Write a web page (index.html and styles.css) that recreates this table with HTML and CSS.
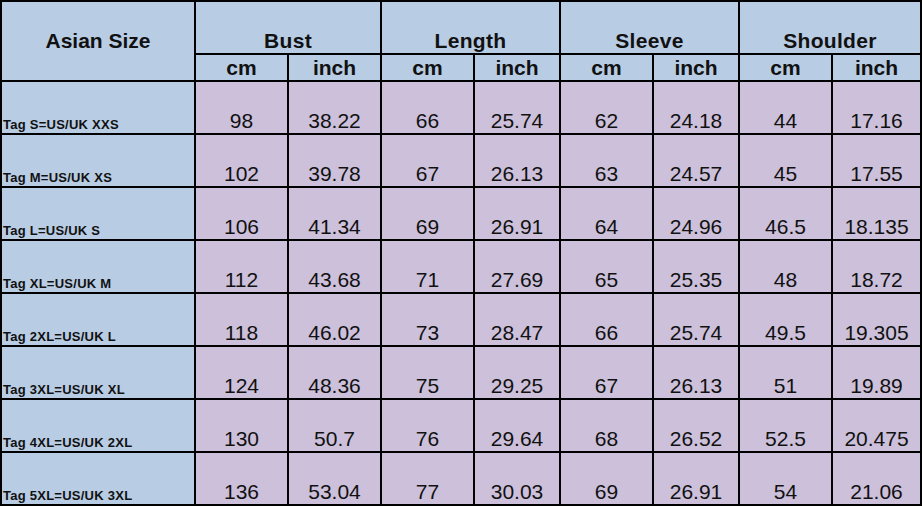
FILE: index.html
```html
<!DOCTYPE html>
<html>
<head>
<meta charset="utf-8">
<title>Size Chart</title>
<link rel="stylesheet" href="styles.css">
</head>
<body>
<div class="chart">
  <div class="cell head size">Asian Size</div>
  <div class="cell head group">Bust</div>
  <div class="cell head group">Length</div>
  <div class="cell head group">Sleeve</div>
  <div class="cell head group">Shoulder</div>
  <div class="cell head unit">cm</div><div class="cell head unit">inch</div>
  <div class="cell head unit">cm</div><div class="cell head unit">inch</div>
  <div class="cell head unit">cm</div><div class="cell head unit">inch</div>
  <div class="cell head unit">cm</div><div class="cell head unit">inch</div>

  <div class="cell tag">Tag S=US/UK XXS</div>
  <div class="cell val">98</div><div class="cell val">38.22</div><div class="cell val">66</div><div class="cell val">25.74</div><div class="cell val">62</div><div class="cell val">24.18</div><div class="cell val">44</div><div class="cell val">17.16</div>

  <div class="cell tag">Tag M=US/UK XS</div>
  <div class="cell val">102</div><div class="cell val">39.78</div><div class="cell val">67</div><div class="cell val">26.13</div><div class="cell val">63</div><div class="cell val">24.57</div><div class="cell val">45</div><div class="cell val">17.55</div>

  <div class="cell tag">Tag L=US/UK S</div>
  <div class="cell val">106</div><div class="cell val">41.34</div><div class="cell val">69</div><div class="cell val">26.91</div><div class="cell val">64</div><div class="cell val">24.96</div><div class="cell val">46.5</div><div class="cell val">18.135</div>

  <div class="cell tag">Tag XL=US/UK M</div>
  <div class="cell val">112</div><div class="cell val">43.68</div><div class="cell val">71</div><div class="cell val">27.69</div><div class="cell val">65</div><div class="cell val">25.35</div><div class="cell val">48</div><div class="cell val">18.72</div>

  <div class="cell tag">Tag 2XL=US/UK L</div>
  <div class="cell val">118</div><div class="cell val">46.02</div><div class="cell val">73</div><div class="cell val">28.47</div><div class="cell val">66</div><div class="cell val">25.74</div><div class="cell val">49.5</div><div class="cell val">19.305</div>

  <div class="cell tag">Tag 3XL=US/UK XL</div>
  <div class="cell val">124</div><div class="cell val">48.36</div><div class="cell val">75</div><div class="cell val">29.25</div><div class="cell val">67</div><div class="cell val">26.13</div><div class="cell val">51</div><div class="cell val">19.89</div>

  <div class="cell tag">Tag 4XL=US/UK 2XL</div>
  <div class="cell val">130</div><div class="cell val">50.7</div><div class="cell val">76</div><div class="cell val">29.64</div><div class="cell val">68</div><div class="cell val">26.52</div><div class="cell val">52.5</div><div class="cell val">20.475</div>

  <div class="cell tag">Tag 5XL=US/UK 3XL</div>
  <div class="cell val">136</div><div class="cell val">53.04</div><div class="cell val">77</div><div class="cell val">30.03</div><div class="cell val">69</div><div class="cell val">26.91</div><div class="cell val">54</div><div class="cell val">21.06</div>
</div>
</body>
</html>
```

FILE: styles.css
```css
html, body {
  margin: 0;
  padding: 0;
  background: #ffffff;
}

.chart {
  display: grid;
  width: 922px;
  box-sizing: border-box;
  padding: 2px;
  gap: 2px;
  background: #000000;
  grid-template-columns: 192px 91px 91px 91px 84px 91px 84px 91px 87px;
  grid-template-rows: 51px 25px repeat(8, 51px);
  font-family: "Liberation Sans", Arial, sans-serif;
  color: #111111;
}

.cell {
  display: flex;
  box-sizing: border-box;
  min-width: 0;
}

.head {
  background: #b8cce4;
  font-weight: bold;
  font-size: 21px;
  justify-content: center;
}

.size {
  grid-row: 1 / span 2;
  align-items: center;
  line-height: 21px;
  padding-bottom: 1px;
}

.group {
  grid-column: span 2;
  align-items: flex-end;
  line-height: 21px;
  padding-bottom: 2px;
  letter-spacing: 0.3px;
}

.unit {
  align-items: center;
  line-height: 25px;
}

.tag {
  background: #b8cce4;
  font-weight: bold;
  font-size: 13px;
  line-height: 13px;
  align-items: flex-end;
  padding-left: 1px;
  padding-bottom: 2px;
  letter-spacing: 0.25px;
}

.val {
  background: #ccc0da;
  font-size: 21px;
  line-height: 21px;
  justify-content: center;
  align-items: flex-end;
  padding-bottom: 2px;
}
```
